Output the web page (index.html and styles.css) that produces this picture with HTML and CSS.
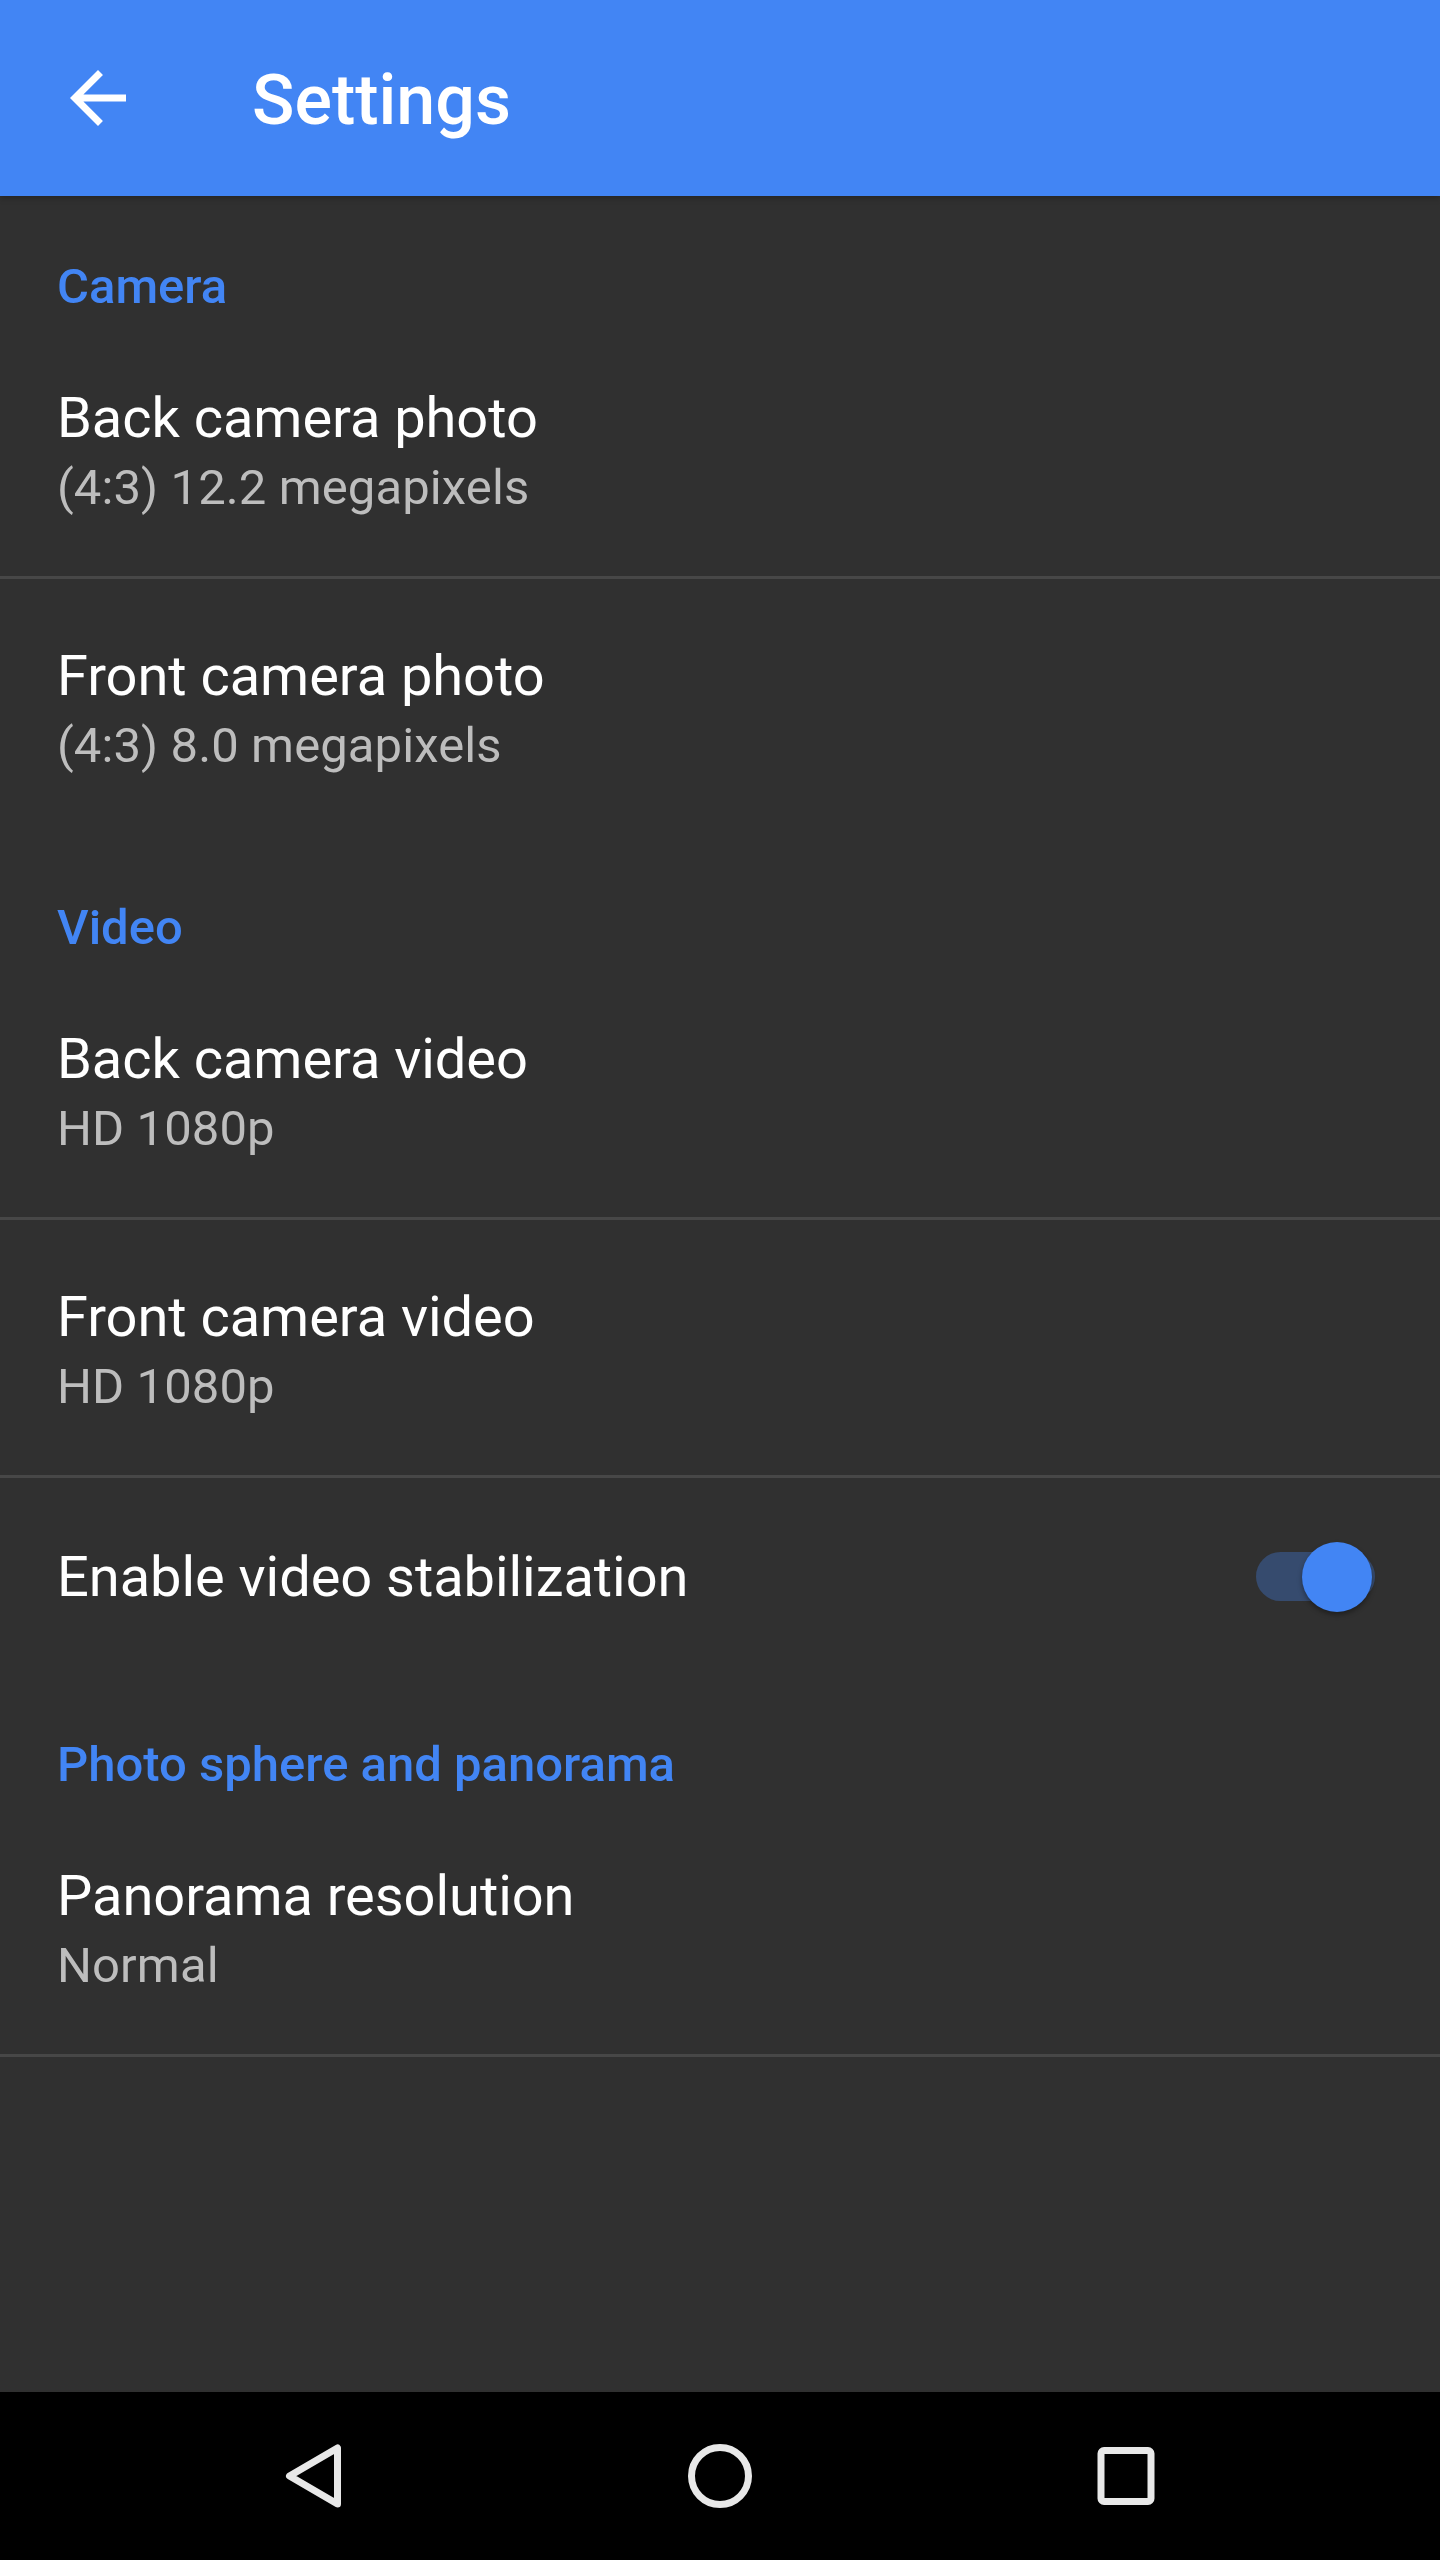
FILE: index.html
```html
<!DOCTYPE html>
<html>
<head>
<meta charset="utf-8">
<link rel="stylesheet" href="styles.css">
</head>
<body>
<div class="screen">
  <header class="appbar">
    <div class="appbar-icon">
      <svg width="84" height="84" viewBox="0 0 24 24"><path fill="#ffffff" d="M20 11H7.83l5.59-5.59L12 4l-8 8 8 8 1.41-1.41L7.83 13H20v-2z"/></svg>
    </div>
    <h1 class="appbar-title">Settings</h1>
  </header>
  <main class="content">
    <div class="category">Camera</div>
    <div class="pref two divided">
      <div class="pref-title">Back camera photo</div>
      <div class="pref-sub">(4:3) 12.2 megapixels</div>
    </div>
    <div class="pref two">
      <div class="pref-title">Front camera photo</div>
      <div class="pref-sub">(4:3) 8.0 megapixels</div>
    </div>
    <div class="category">Video</div>
    <div class="pref two divided">
      <div class="pref-title">Back camera video</div>
      <div class="pref-sub">HD 1080p</div>
    </div>
    <div class="pref two divided">
      <div class="pref-title">Front camera video</div>
      <div class="pref-sub">HD 1080p</div>
    </div>
    <div class="pref one">
      <div class="pref-title">Enable video stabilization</div>
      <div class="switch">
        <div class="switch-track"></div>
        <div class="switch-thumb"></div>
      </div>
    </div>
    <div class="category">Photo sphere and panorama</div>
    <div class="pref two divided">
      <div class="pref-title">Panorama resolution</div>
      <div class="pref-sub">Normal</div>
    </div>
  </main>
  <nav class="navbar">
    <div class="nav-btn">
      <svg width="64" height="64" viewBox="0 0 64 64"><path d="M55.5 4 L55.5 60 L7.5 32 Z" fill="none" stroke="#e8e8e8" stroke-width="7" stroke-linejoin="round"/></svg>
    </div>
    <div class="nav-btn">
      <svg width="64" height="64" viewBox="0 0 64 64"><circle cx="32" cy="32" r="28.5" fill="none" stroke="#e8e8e8" stroke-width="7"/></svg>
    </div>
    <div class="nav-btn">
      <svg width="64" height="64" viewBox="0 0 64 64"><rect x="7" y="6.5" width="50" height="51" rx="3" fill="none" stroke="#e8e8e8" stroke-width="7"/></svg>
    </div>
  </nav>
</div>
</body>
</html>
```

FILE: styles.css
```css
html, body {
  margin: 0;
  padding: 0;
  background: #303030;
}
body {
  font-family: Roboto, "Noto Sans", "Liberation Sans", sans-serif;
}
.screen {
  width: 1440px;
  height: 2560px;
  display: flex;
  flex-direction: column;
  background: #303030;
  overflow: hidden;
}
.appbar {
  height: 196px;
  flex: 0 0 196px;
  background: #4285f4;
  display: flex;
  align-items: center;
  box-shadow: 0 2px 6px rgba(0,0,0,0.25);
  position: relative;
  z-index: 1;
}
.appbar-icon {
  width: 84px;
  height: 84px;
  margin-left: 56px;
  display: flex;
}
.appbar-title {
  margin: 0 0 0 112px;
  padding-top: 4px;
  font-size: 70px;
  font-weight: 500;
  color: #ffffff;
  line-height: 82px;
}
.content {
  flex: 1;
  display: flex;
  flex-direction: column;
}
.category {
  box-sizing: border-box;
  height: 125px;
  padding: 63px 56px 0 57px;
  font-size: 49px;
  line-height: 56px;
  font-weight: 500;
  color: #4285f4;
}
.pref {
  box-sizing: border-box;
  padding: 0 56px 0 57px;
}
.pref.divided {
  border-bottom: 3px solid #474747;
}
.pref.two {
  height: 258px;
  padding-top: 65px;
}
.pref.one {
  height: 196px;
  display: flex;
  align-items: center;
  justify-content: space-between;
  padding-top: 1px;
}
.pref-title {
  font-size: 56px;
  line-height: 64px;
  letter-spacing: -0.05px;
  color: #ffffff;
}
.pref-sub {
  margin-top: 10px;
  font-size: 49px;
  line-height: 56px;
  letter-spacing: 0.1px;
  color: #bdbdbd;
}
.switch {
  position: relative;
  width: 119px;
  height: 70px;
  margin-right: 9px;
}
.switch-track {
  position: absolute;
  left: 0;
  right: 0;
  top: 10px;
  height: 49px;
  border-radius: 25px;
  background: #364b6e;
}
.switch-thumb {
  position: absolute;
  right: 3px;
  top: 0;
  width: 70px;
  height: 70px;
  border-radius: 50%;
  background: #4285f4;
  box-shadow: 0 3px 5px rgba(0,0,0,0.35);
}
.navbar {
  flex: 0 0 168px;
  height: 168px;
  background: #000000;
  display: flex;
  justify-content: center;
  align-items: center;
}
.nav-btn {
  width: 406px;
  height: 168px;
  display: flex;
  align-items: center;
  justify-content: center;
}
```
